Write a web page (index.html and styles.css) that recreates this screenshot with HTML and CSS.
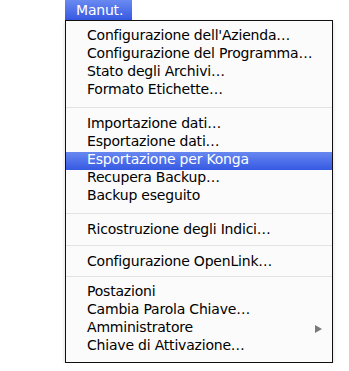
FILE: index.html
```html
<!DOCTYPE html>
<html>
<head>
<meta charset="utf-8">
<link rel="stylesheet" href="styles.css">
</head>
<body>
<div class="wrap">
  <div class="title">Manut.</div>
  <div class="menu">
    <div class="group">
      <div class="item">Configurazione dell'Azienda…</div>
      <div class="item">Configurazione del Programma…</div>
      <div class="item">Stato degli Archivi…</div>
      <div class="item">Formato Etichette…</div>
    </div>
    <div class="sep sep-a"></div>
    <div class="group">
      <div class="item">Importazione dati…</div>
      <div class="item">Esportazione dati…</div>
      <div class="item active">Esportazione per Konga</div>
      <div class="item">Recupera Backup…</div>
      <div class="item">Backup eseguito</div>
    </div>
    <div class="sep sep-b"></div>
    <div class="group">
      <div class="item">Ricostruzione degli Indici…</div>
    </div>
    <div class="sep sep-c"></div>
    <div class="group">
      <div class="item">Configurazione OpenLink…</div>
    </div>
    <div class="sep sep-d"></div>
    <div class="group">
      <div class="item">Postazioni</div>
      <div class="item">Cambia Parola Chiave…</div>
      <div class="item sub"><span>Amministratore</span><span class="arrow"></span></div>
      <div class="item">Chiave di Attivazione…</div>
    </div>
  </div>
</div>
</body>
</html>
```
FILE: styles.css
```css
html, body {
  margin: 0;
  padding: 0;
  background: #ffffff;
}
body {
  font-family: "DejaVu Sans", "Liberation Sans", sans-serif;
  font-size: 14px;
  letter-spacing: -0.2px;
  color: #000;
}
.wrap {
  padding-left: 65px;
  width: 268px;
}
.title {
  width: 56px;
  height: 20px;
  line-height: 20px;
  padding-left: 11px;
  color: #fff;
  background: linear-gradient(#6a8af0, #3759e2);
}
.menu {
  box-sizing: border-box;
  width: 268px;
  height: 343px;
  border: 1px solid #111;
  background: #fbfbfb;
  padding: 7px 0 6px;
  box-shadow: 0 2px 4px rgba(0,0,0,0.15);
}
.item {
  box-sizing: border-box;
  height: 18px;
  line-height: 14px;
  padding-left: 21px;
  white-space: nowrap;
}
.item.active {
  color: #fff;
  background: linear-gradient(#6788f0, #3659e3);
}
.sub {
  display: flex;
  justify-content: space-between;
  align-items: flex-start;
  padding-right: 10px;
}
.arrow {
  margin-top: 4.5px;
  width: 0;
  height: 0;
  border-top: 4.5px solid transparent;
  border-bottom: 4.5px solid transparent;
  border-left: 7px solid #7a7a7a;
}
.sep {
  box-sizing: border-box;
  display: flex;
  align-items: flex-start;
}
.sep::after {
  content: "";
  display: block;
  flex: 1;
  height: 1px;
  background: #e3e3e3;
}
.sep-a { height: 16px; padding-top: 7px; }
.sep-b { height: 16px; padding-top: 7px; }
.sep-c { height: 14px; padding-top: 5px; }
.sep-d { height: 12px; padding-top: 4px; }
```
